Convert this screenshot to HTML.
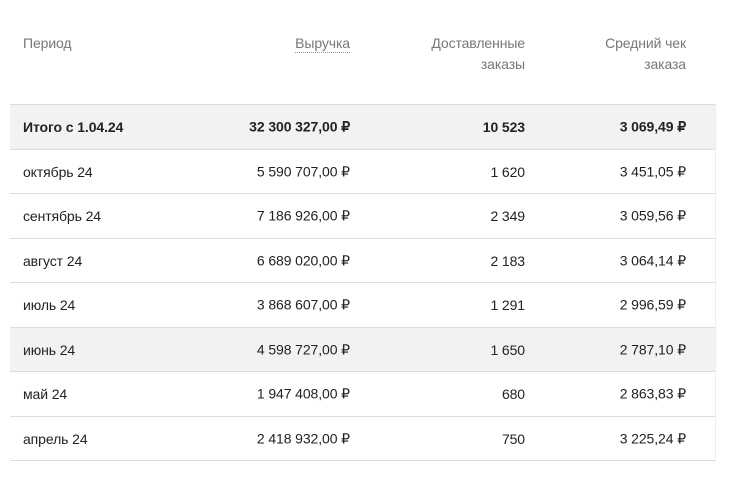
<!DOCTYPE html>
<html><head><meta charset="utf-8"><style>
body{margin:0;width:751px;height:486px;background:#fff;font-family:"Liberation Sans",sans-serif;font-size:14px;color:#222;position:relative;overflow:hidden;letter-spacing:-0.1px}
.h{position:absolute;color:#777;line-height:21px;text-align:right}
.row{position:absolute;left:10px;width:706px;border-bottom:1px solid #dcdcdc;box-sizing:border-box}
.row span{position:absolute;top:50%;transform:translateY(-50%);white-space:nowrap}
.c1{left:13px}.c2{right:366px}.c3{right:191px}.c4{right:30px}
.g{background:#f2f2f2}
.b{font-weight:bold}
.vl{position:absolute;left:715px;top:104px;width:1px;height:357px;background:#eee}
</style></head><body>
<div class="h" style="left:23px;top:33px;text-align:left">Период</div>
<div class="h" style="right:401px;border-bottom:1px dotted #999;line-height:17px;top:35px">Выручка</div>
<div class="h" style="right:226px;top:33px">Доставленные<br>заказы</div>
<div class="h" style="right:65px;top:33px">Средний чек<br>заказа</div>
<div class="row g b" style="top:104px;height:46px;border-top:1px solid #dcdcdc"><span class="c1">Итого с 1.04.24</span><span class="c2">32 300 327,00 ₽</span><span class="c3">10 523</span><span class="c4">3 069,49 ₽</span></div>
<div class="row" style="top:150px;height:44px"><span class="c1">октябрь 24</span><span class="c2">5 590 707,00 ₽</span><span class="c3">1 620</span><span class="c4">3 451,05 ₽</span></div>
<div class="row" style="top:194px;height:45px"><span class="c1">сентябрь 24</span><span class="c2">7 186 926,00 ₽</span><span class="c3">2 349</span><span class="c4">3 059,56 ₽</span></div>
<div class="row" style="top:239px;height:44px"><span class="c1">август 24</span><span class="c2">6 689 020,00 ₽</span><span class="c3">2 183</span><span class="c4">3 064,14 ₽</span></div>
<div class="row" style="top:283px;height:45px"><span class="c1">июль 24</span><span class="c2">3 868 607,00 ₽</span><span class="c3">1 291</span><span class="c4">2 996,59 ₽</span></div>
<div class="row g" style="top:328px;height:44px"><span class="c1">июнь 24</span><span class="c2">4 598 727,00 ₽</span><span class="c3">1 650</span><span class="c4">2 787,10 ₽</span></div>
<div class="row" style="top:372px;height:45px"><span class="c1">май 24</span><span class="c2">1 947 408,00 ₽</span><span class="c3">680</span><span class="c4">2 863,83 ₽</span></div>
<div class="row" style="top:417px;height:44px"><span class="c1">апрель 24</span><span class="c2">2 418 932,00 ₽</span><span class="c3">750</span><span class="c4">3 225,24 ₽</span></div>
<div class="vl"></div>
</body></html>
